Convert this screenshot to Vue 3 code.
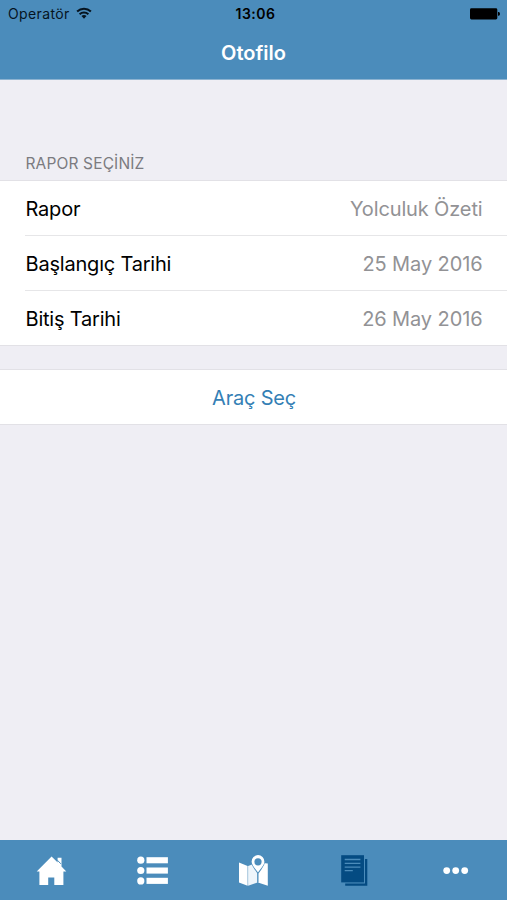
<script setup>
const rows = [
  { label: 'Rapor', value: 'Yolculuk Özeti', name: 'report' },
  { label: 'Başlangıç Tarihi', value: '25 May 2016', name: 'start' },
  { label: 'Bitiş Tarihi', value: '26 May 2016', name: 'end' },
]
</script>

<template>
  <div class="screen">
    <header class="header">
      <div class="status">
        <div class="carrier">
          <span>Operatör</span>
          <svg class="wifi" width="16" height="12" viewBox="0 0 16 12" fill="none" stroke="#06141f" stroke-width="2">
            <path d="M1.1 4.5C5 .7 11 .7 14.9 4.5" />
            <path d="M3.6 7.2C6.1 4.9 9.9 4.9 12.4 7.2" />
            <path d="M5.5 9C7 7.8 9 7.8 10.5 9L8 11.7Z" fill="#06141f" stroke="none" />
          </svg>
        </div>
        <time class="time">13:06</time>
        <svg class="battery" width="30" height="12" viewBox="0 0 30 12">
          <rect x="0" y="0.3" width="27.3" height="11.2" rx="1.4" />
          <path d="M28 4.1h.6a1.4 1.8 0 0 1 0 3.6H28z" />
        </svg>
      </div>
      <h1 class="title">Otofilo</h1>
    </header>

    <main class="content">
      <h2 class="section">RAPOR SEÇİNİZ</h2>
      <div class="group">
        <div v-for="row in rows" :key="row.name" class="row">
          <span class="label">{{ row.label }}</span>
          <span class="value" :class="row.name">{{ row.value }}</span>
        </div>
      </div>
      <button class="action">Araç Seç</button>
    </main>

    <nav class="tabs">
      <a class="tab">
        <svg width="32" height="32" viewBox="0 0 32 32" fill="#fff">
          <path d="M16.6 1.5L1.7 16.4H4.4V30H13.2V22.6H19.3V30H28.4V16.4H31.3L26.5 11.6V2.8H22.6V7.5Z" />
          <path d="M22.4 5.2L25.8 8.8" stroke="#4b8cbb" stroke-width="1" />
        </svg>
      </a>
      <a class="tab">
        <svg width="32" height="32" viewBox="0 0 32 32" fill="#fff">
          <circle cx="4.8" cy="5.2" r="3.6" /><rect x="10.5" y="2.2" width="21.4" height="6.1" />
          <circle cx="4.8" cy="15.5" r="3.6" /><rect x="10.5" y="12.5" width="21.4" height="6.1" />
          <circle cx="4.8" cy="25.9" r="3.6" /><rect x="10.5" y="22.8" width="21.4" height="6.1" />
        </svg>
      </a>
      <a class="tab">
        <svg width="32" height="32" viewBox="0 0 32 32">
          <path d="M2 7.6L10.6 11V30.8L2 27.4Z" fill="#fff" />
          <path d="M11.1 11L20.4 7.6V27.4L11.1 30.8Z" fill="#eef5fb" />
          <path d="M21 7.6L30.8 8.6V30.8L21 27.4Z" fill="#fff" />
          <path d="M21 .1A6.8 6.8 0 0 0 14.2 6.9C14.2 10.2 18 14.7 20.4 18.5V27.5H21.5V18.5C24 14.7 27.8 10.2 27.8 6.9A6.8 6.8 0 0 0 21 .1Z" fill="#4b8cbb" />
          <path d="M21 .1A6.6 6.6 0 0 0 14.6 6.7C14.6 9.8 18.2 13.6 21 17.4C23.8 13.6 27.4 9.8 27.4 6.7A6.6 6.6 0 0 0 21 .1Z" fill="#fff" />
          <circle cx="21" cy="6.8" r="3.6" fill="#4b8cbb" />
        </svg>
      </a>
      <a class="tab">
        <svg width="32" height="32" viewBox="0 0 32 32" fill="#044b82">
          <rect x="2.2" y="0.2" width="22.8" height="27.2" />
          <path d="M26 4H28.3V30.8H6.2V28.6H26Z" />
          <path d="M5.7 4.5H21.4M5.7 8.3H21.4M5.7 12.1H21.4M5.7 15.7H13.8" fill="none" stroke="#4b8cbb" stroke-width="1.3" />
        </svg>
      </a>
      <a class="tab">
        <svg width="32" height="32" viewBox="0 0 32 32" fill="#fff">
          <circle cx="6.7" cy="15.6" r="3.4" /><circle cx="15.7" cy="15.6" r="3.4" /><circle cx="24.7" cy="15.6" r="3.4" />
        </svg>
      </a>
    </nav>
  </div>
</template>

<style>
body { margin: 0; }
</style>

<style scoped>
.screen {
  display: flex;
  flex-direction: column;
  width: 507px;
  height: 900px;
  overflow: hidden;
  background: #efeef4;
  color: #000;
  font-family: Inter, "Liberation Sans", sans-serif;
}
.header {
  box-sizing: border-box;
  height: 80px;
  background: #4b8cbb;
  border-bottom: 1px solid #8db3d1;
}
.status {
  display: grid;
  grid-template-columns: 1fr auto 1fr;
  align-items: center;
  height: 27px;
  padding: 0 7px 0 8px;
  color: #06141f;
}
.carrier { display: flex; align-items: center; gap: 6px; font-size: 14px; letter-spacing: 0.38px; }
.wifi { margin-top: -2px; }
.time { padding-left: 3px; font-size: 14px; font-weight: 600; letter-spacing: 0.5px; color: #000; }
.battery { justify-self: end; }
.title {
  margin: 0;
  line-height: 52px;
  text-align: center;
  font-size: 20px;
  font-weight: 600;
  color: #fff;
}
.content { flex: 1; }
.section {
  margin: 0;
  padding: 72px 25.5px 0;
  height: 28px;
  line-height: 23px;
  font-size: 15.5px;
  font-weight: 400;
  letter-spacing: 0.14px;
  color: #7b7b80;
}
.group {
  background: #fff;
  border-top: 1px solid #e2e1e6;
  border-bottom: 1px solid #e2e1e6;
}
.row {
  box-sizing: border-box;
  display: flex;
  justify-content: space-between;
  align-items: center;
  height: 55px;
  margin-left: 25px;
  padding: 2px 24.5px 0 0.5px;
  font-size: 20px;
  letter-spacing: -0.2px;
}
.row:first-child { height: 54px; }
.row + .row { border-top: 1px solid #e6e6e8; }
.value { color: #929295; letter-spacing: -0.1px; }
.value.report { letter-spacing: -0.14px; }
.action {
  display: block;
  box-sizing: border-box;
  width: 100%;
  height: 56px;
  margin: 23px 0 0;
  padding: 2px 0 0 1px;
  border: solid #e2e1e6;
  border-width: 1px 0;
  background: #fff;
  color: #347fb5;
  font: 20px Inter, "Liberation Sans", sans-serif;
  letter-spacing: -0.2px;
}
.tabs {
  display: grid;
  grid-template-columns: repeat(5, 1fr);
  height: 60px;
  background: #4b8cbb;
}
.tab { display: flex; justify-content: center; align-items: center; padding-top: 2px; }
</style>
